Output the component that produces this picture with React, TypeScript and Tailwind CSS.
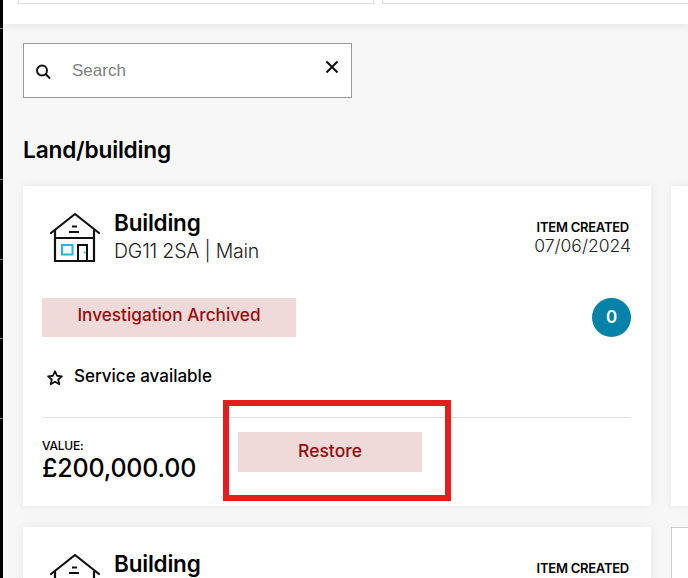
import React from "react";

const sans = "[font-family:Inter,'Liberation_Sans',sans-serif]";

function House() {
  return (
    <svg width="52" height="50" viewBox="0 0 52 50" fill="none" className="shrink-0">
      <path d="M3 21 27 2l24 19" stroke="#111" strokeWidth="2.200" strokeLinejoin="round" strokeLinecap="round" />
      <path d="M7 26h39M7 18v31h39V18" stroke="#111" strokeWidth="2.200" />
      <path d="M24 14.500h5M21 20h10" stroke="#111" strokeWidth="1.800" />
      <rect x="14" y="33" width="10.500" height="9.500" stroke="#22b4ea" strokeWidth="2" />
      <path d="M30 49V33h9v16" stroke="#111" strokeWidth="2" />
      <path d="M36 40.500h1.500" stroke="#22b4ea" strokeWidth="2" />
    </svg>
  );
}

function Heading() {
  return (
    <div className="flex items-start justify-between">
      <div className="flex items-start gap-[14px] pl-[6px]">
        <div className="pt-[2px]"><House /></div>
        <div>
          <div className="text-[22.500px] leading-[26px] font-semibold text-black tracking-[-0.2px]">Building</div>
          <div className="mt-[1px] text-[19.500px] leading-[28px] font-light text-[#222] tracking-[-0.2px]">DG11 2SA | Main</div>
        </div>
      </div>
      <div className="text-right pt-[10px]">
        <div className="pr-[2px] text-[13px] leading-[14px] font-semibold text-black tracking-[-0.25px]">ITEM CREATED</div>
        <div className="mt-[1px] text-[17.500px] leading-[22px] font-light text-[#222]">07/06/2024</div>
      </div>
    </div>
  );
}

export default function App() {
  return (
    <div className={`flex h-[578px] w-[688px] overflow-hidden bg-[#f7f7f7] ${sans}`}>
      <div className="flex w-[3px] shrink-0 flex-col bg-black">
        <div className="mt-[28px] h-px bg-[#777]" />
        <div className="mt-[150px] h-px bg-[#777]" />
        <div className="mt-[79px] h-px bg-[#777]" />
        <div className="mt-[78px] h-px bg-[#777]" />
        <div className="mt-[79px] h-px bg-[#777]" />
      </div>
      <div className="flex min-w-0 flex-1 flex-col">
        <header className="flex h-[24px] shrink-0 gap-[8px] bg-white pl-[15px] shadow-[0_2px_8px_rgba(0,0,0,0.08)]">
          <div className="h-[4px] w-[356px] border border-t-0 border-[#ddd]" />
          <div className="h-[4px] flex-1 border border-t-0 border-r-0 border-[#ddd]" />
        </header>
        <main className="relative flex-1 pl-[20px] pt-[19px]">
          <div className="flex h-[55px] w-[329px] items-center border border-[#9a9a9a] bg-white pl-[11px] pr-[12px]">
            <svg width="16" height="16" viewBox="0 0 16 16" fill="none" className="shrink-0">
              <circle cx="7" cy="7.500" r="5" stroke="#111" strokeWidth="1.900" />
              <path d="m10.600 11 4.400 4.500" stroke="#111" strokeWidth="2" />
            </svg>
            <span className="ml-[21px] flex-1 text-[17px] text-[#808080] [font-family:'Liberation_Sans',sans-serif]">Search</span>
            <svg width="14" height="14" viewBox="0 0 14 14" fill="none" className="mb-[7px] shrink-0">
              <path d="m1.500 1.500 11 11m0-11-11 11" stroke="#111" strokeWidth="2" />
            </svg>
          </div>
          <h2 className="mt-[38px] text-[22.700px] leading-[28px] font-semibold text-black tracking-[-0.2px]">Land/building</h2>

          <div className="mt-[22px] flex gap-[20px]">
            <section className="relative h-[320px] w-[628px] shrink-0 bg-white pl-[19px] pr-[20px] pt-[24px] shadow-[0_0_10px_rgba(0,0,0,0.07)]">
              <Heading />
              <div className="mt-[33px] flex items-center justify-between">
                <div className="flex h-[39px] w-[254px] items-center justify-center bg-[#efd9d9] pb-[5px] text-[17.200px] font-medium text-[#960c0c]">
                  Investigation Archived
                </div>
                <div className="flex h-[39px] w-[39px] items-center justify-center rounded-full bg-[#0482a8] text-[17px] font-semibold text-white">0</div>
              </div>
              <div className="mt-[27px] flex items-center gap-[10px] pl-[4px]">
                <svg width="18" height="18" viewBox="0 0 24 24" fill="none" className="mt-[3px] shrink-0">
                  <path d="m12 3 2.700 6 6.500.7-4.900 4.300 1.400 6.400L12 17.100 6.300 20.400l1.400-6.400-4.900-4.300 6.500-.7z" stroke="#111" strokeWidth="2.400" strokeLinejoin="round" />
                </svg>
                <span className="text-[17px] leading-[24px] font-medium text-black">Service available</span>
              </div>
              <div className="mt-[29px] border-t border-[#e2e2e2]" />
              <div className="mt-[14px] flex items-start">
                <div className="w-[196px] pt-[6px]">
                  <div className="text-[12px] leading-[15px] font-medium text-black tracking-[-0.2px]">VALUE:</div>
                  <div className="text-[25px] leading-[30px] font-medium text-black tracking-[-0.2px]">£200,000.00</div>
                </div>
                <div className="flex h-[40px] w-[184px] items-center justify-center bg-[#efd9d9] pb-[1px] text-[17.500px] font-medium text-[#960c0c]">Restore</div>
              </div>
            </section>
            <section className="h-[320px] w-[60px] shrink-0 bg-white shadow-[0_0_10px_rgba(0,0,0,0.07)]" />
          </div>

          <div className="mt-[21px] flex gap-[20px]">
            <section className="h-[60px] w-[628px] shrink-0 overflow-hidden bg-white pl-[19px] pr-[20px] pt-[24px] shadow-[0_0_10px_rgba(0,0,0,0.07)]">
              <Heading />
            </section>
            <section className="h-[60px] w-[60px] shrink-0 border border-[#ccc] bg-white" />
          </div>

          <div className="absolute left-[220px] top-[376px] h-[101px] w-[228px] border-[6px] border-[#e81c1c]" />
        </main>
      </div>
    </div>
  );
}
